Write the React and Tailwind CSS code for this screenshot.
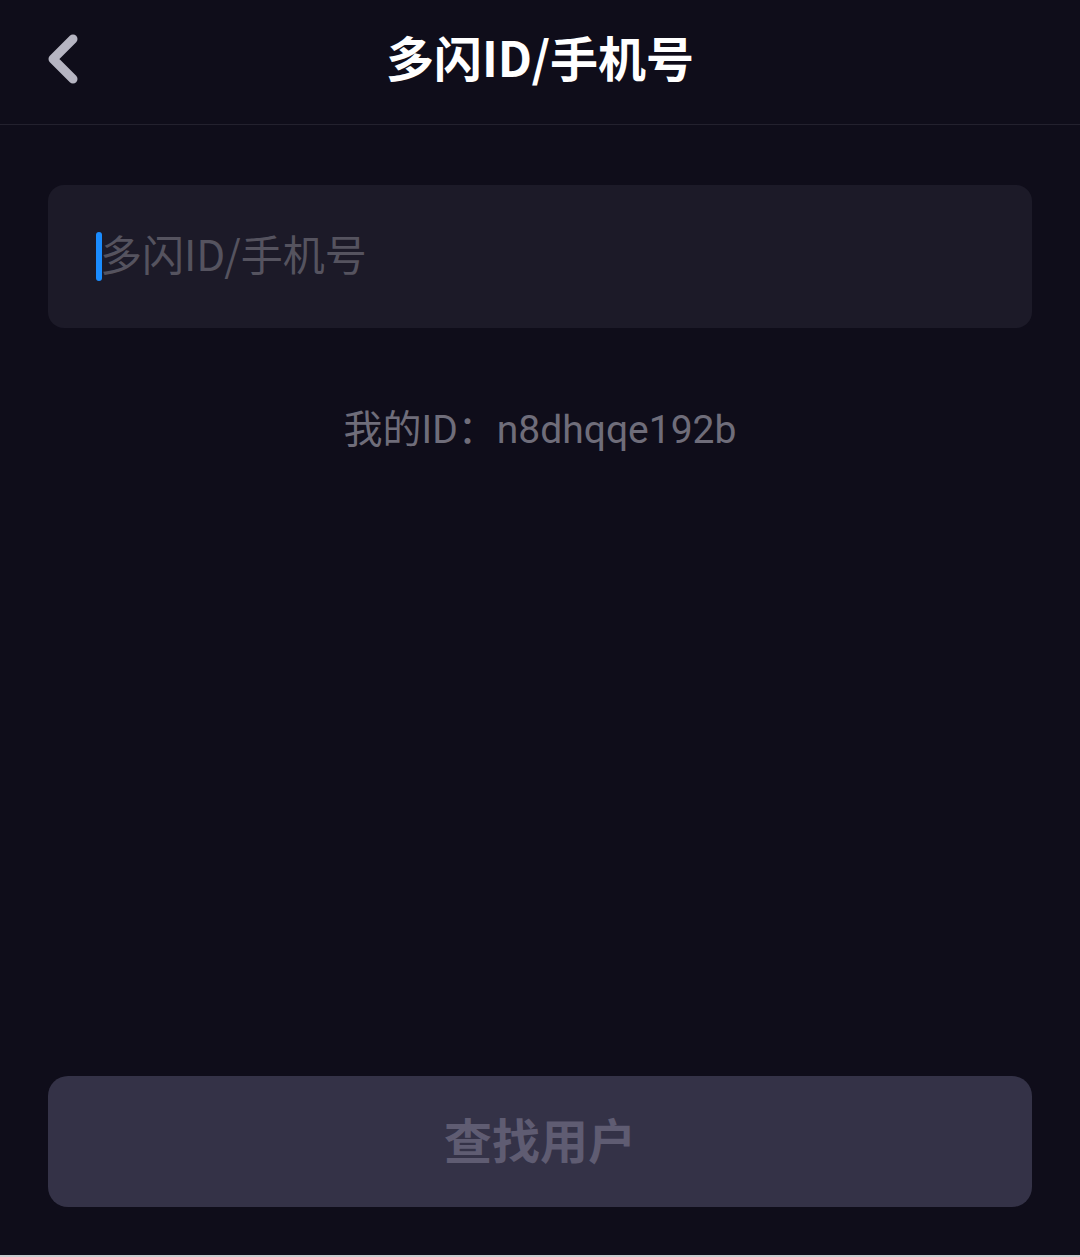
import React from 'react';

const BackIcon = () => (
    <svg width="40" height="56" viewBox="0 0 40 56" fill="none">
        <path d="M29 8 L9 28 L29 48" stroke="#b6b5c2" strokeWidth="9" strokeLinecap="round" strokeLinejoin="round" />
    </svg>
);

export default function App() {
    return (
        <div className="flex flex-col h-[1257px] bg-[#0f0d1a] font-['Roboto','Noto_Sans_CJK_SC',sans-serif]">
            {/* Header */}
            <header className="relative h-[125px] flex items-center justify-center border-b border-[#23212e] shrink-0">
                <button className="absolute left-[44px] top-[31px]" aria-label="Back">
                    <BackIcon />
                </button>
                <h1 className="text-[48px] font-bold text-white leading-none -mt-[12px] font-['Noto_Sans_CJK_SC',sans-serif]">多闪ID/手机号</h1>
            </header>

            {/* Content */}
            <main className="flex-1 flex flex-col px-12 pt-[60px] pb-[48px]">
                <div className="h-[143px] rounded-2xl bg-[#1c1a28] flex items-center pl-[52px] pr-8 relative">
                    <span className="absolute left-[48px] top-[47px] w-[6px] h-[49px] rounded-full bg-[#1a8cff]" />
                    <span className="text-[42px] text-[#55535f] leading-none -mt-[8px] font-['Noto_Sans_CJK_SC',sans-serif]">多闪ID/手机号</span>
                </div>

                <p className="mt-[83px] text-center text-[39px] leading-none text-[#6f6d7a]">我的ID：n8dhqqe192b</p>

                <div className="flex-1" />

                <button className="h-[131px] rounded-[20px] bg-[#343247] flex items-center justify-center">
                    <span className="text-[48px] font-bold text-[#5f5c72] leading-none -mt-[8px] font-['Noto_Sans_CJK_SC',sans-serif]">查找用户</span>
                </button>
            </main>
            <div className="h-[2px] bg-[#c9ccd0] shrink-0" />
        </div>
    );
}
